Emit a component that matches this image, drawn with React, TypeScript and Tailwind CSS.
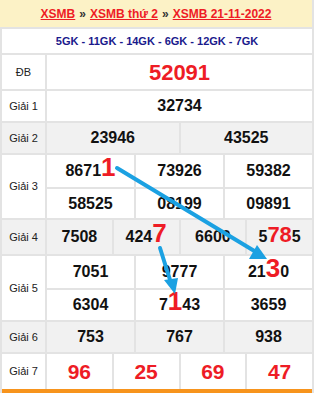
import React from "react";

type Cell = React.ReactNode;

const red = "text-[#ee1c25]";

function Big(props: { children: React.ReactNode; size?: string }) {
  return (
    <span
      className={
        (props.size ?? "text-[26px]") +
        " " +
        red +
        " inline-block h-[14px] leading-[14px] align-baseline"
      }
    >
      {props.children}
    </span>
  );
}

function Row(props: {
  label: string;
  rows: Cell[][];
  heights: number[];
  gray?: boolean;
  numClass?: string;
}) {
  return (
    <div
      className={
        "flex border-b-2 border-[#e3e3e3] " + (props.gray ? "bg-[#f1f1f1]" : "bg-white")
      }
    >
      <div className="w-[45px] shrink-0 border-r-2 border-[#e3e3e3] flex items-center justify-center text-[11px] text-[#222]">
        {props.label}
      </div>
      <div className="flex-1 flex flex-col">
        {props.rows.map((cells, i) => (
          <div
            key={i}
            className={"flex " + (i > 0 ? "border-t-2 border-[#e3e3e3]" : "")}
            style={{ height: props.heights[i] }}
          >
            {cells.map((c, j) => (
              <div
                key={j}
                className={
                  "flex-1 basis-0 flex items-center justify-center font-bold " +
                  (props.numClass ?? "text-[16px] text-[#111]") +
                  (j > 0 ? " border-l-2 border-[#e3e3e3]" : "")
                }
              >
                {c}
              </div>
            ))}
          </div>
        ))}
      </div>
    </div>
  );
}

function Arrows() {
  return (
    <svg
      className="absolute left-0 top-0 pointer-events-none"
      width="317"
      height="395"
      viewBox="0 0 317 395"
    >
      <line x1="117" y1="168" x2="256" y2="252" stroke="#1ba1e2" strokeWidth="4" strokeLinecap="round" />
      <polygon points="267,259 249,259 257,245" fill="#1ba1e2" />
      <line x1="160" y1="248" x2="171" y2="283" stroke="#1ba1e2" strokeWidth="4" strokeLinecap="round" />
      <polygon points="175,294 164,280 178,278" fill="#1ba1e2" />
    </svg>
  );
}

export default function App() {
  return (
    <div
      className="relative w-[314px] bg-white"
      style={{ fontFamily: '"Liberation Sans", Arial, sans-serif' }}
    >
      <div className="h-[29px] bg-[#fcf2c6] flex items-center justify-center text-[12px] font-bold border-b-2 border-[#e3e3e3] border-r-2">
        <span className={red + " underline"}>XSMB</span>
        <span className="text-[#333] mx-[4px]">»</span>
        <span className={red + " underline"}>XSMB thứ 2</span>
        <span className="text-[#333] mx-[4px]">»</span>
        <span className={red + " underline"}>XSMB 21-11-2022</span>
      </div>
      <div className="border-x-2 border-[#e3e3e3]">
        <div className="h-[26px] flex items-center justify-center text-[11px] font-bold text-[#1a1a8c] border-b-2 border-[#e3e3e3]">
          5GK - 11GK - 14GK - 6GK - 12GK - 7GK
        </div>
        <Row label="ĐB" rows={[["52091"]]} heights={[34]} numClass={"text-[22px] " + red} />
        <Row label="Giải 1" rows={[["32734"]]} heights={[30]} />
        <Row label="Giải 2" gray rows={[["23946", "43525"]]} heights={[30]} />
        <Row
          label="Giải 3"
          rows={[
            [
              <span>
                8671<Big>1</Big>
              </span>,
              "73926",
              "59382",
            ],
            ["58525", "08199", "09891"],
          ]}
          heights={[32, 31]}
        />
        <Row
          label="Giải 4"
          gray
          rows={[
            [
              "7508",
              <span>
                424<Big>7</Big>
              </span>,
              "6600",
              <span>
                5<Big size="text-[22px]">78</Big>5
              </span>,
            ],
          ]}
          heights={[34]}
        />
        <Row
          label="Giải 5"
          rows={[
            [
              "7051",
              "9777",
              <span>
                21<Big>3</Big>0
              </span>,
            ],
            [
              "6304",
              <span>
                7<Big>1</Big>43
              </span>,
              "3659",
            ],
          ]}
          heights={[32, 32]}
        />
        <Row label="Giải 6" gray rows={[["753", "767", "938"]]} heights={[30]} />
        <div className="flex border-b-[4px] border-b-[#f7941d]">
          <div className="w-[45px] shrink-0 border-r-2 border-[#e3e3e3] flex items-center justify-center text-[11px] text-[#222]">
            Giải 7
          </div>
          <div className="flex-1 flex h-[35px]">
            {["96", "25", "69", "47"].map((n, j) => (
              <div
                key={n}
                className={
                  "flex-1 basis-0 flex items-center justify-center font-bold text-[21px] " +
                  red +
                  (j > 0 ? " border-l-2 border-[#e3e3e3]" : "")
                }
              >
                {n}
              </div>
            ))}
          </div>
        </div>
      </div>
      <Arrows />
    </div>
  );
}
